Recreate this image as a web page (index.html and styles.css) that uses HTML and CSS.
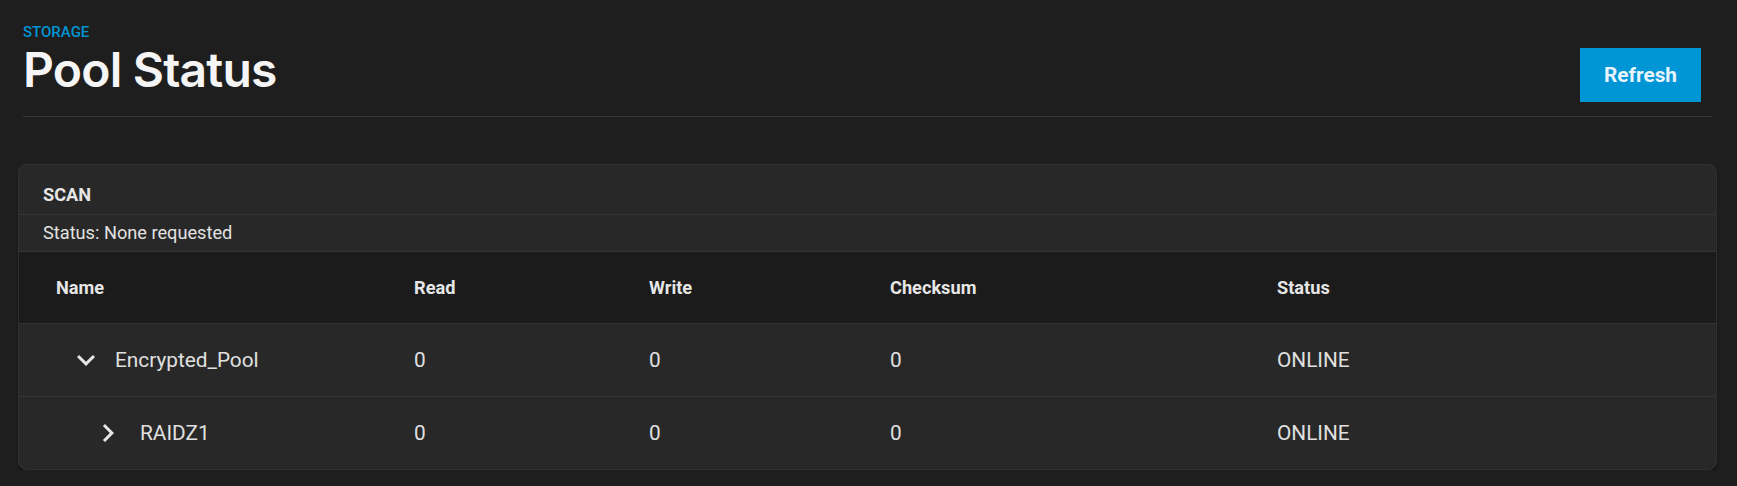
FILE: index.html
```html
<!DOCTYPE html>
<html lang="en">
<head>
<meta charset="utf-8">
<title>Pool Status</title>
<link rel="stylesheet" href="styles.css">
</head>
<body>
  <header class="page-header">
    <div class="titles">
      <div class="crumb">STORAGE</div>
      <h1 class="title">Pool Status</h1>
    </div>
    <button class="btn-primary">Refresh</button>
  </header>

  <section class="card">
    <div class="scan-title">SCAN</div>
    <div class="scan-status">Status: None requested</div>
    <div class="grid head">
      <div class="cell">Name</div>
      <div class="cell">Read</div>
      <div class="cell">Write</div>
      <div class="cell">Checksum</div>
      <div class="cell">Status</div>
    </div>
    <div class="grid row">
      <div class="cell name lvl0">
        <svg class="chev" viewBox="0 0 24 24"><path d="M16.59 8.59L12 13.17 7.41 8.59 6 10l6 6 6-6z"/></svg>
        <span class="nm">Encrypted_Pool</span>
      </div>
      <div class="cell">0</div>
      <div class="cell">0</div>
      <div class="cell">0</div>
      <div class="cell">ONLINE</div>
    </div>
    <div class="grid row last">
      <div class="cell name lvl1">
        <svg class="chev" viewBox="0 0 24 24"><path d="M10 6L8.59 7.41 13.17 12l-4.58 4.59L10 18l6-6z"/></svg>
        <span class="nm">RAIDZ1</span>
      </div>
      <div class="cell">0</div>
      <div class="cell">0</div>
      <div class="cell">0</div>
      <div class="cell">ONLINE</div>
    </div>
  </section>
</body>
</html>
```

FILE: styles.css
```css
html, body {
  margin: 0;
  padding: 0;
  background: #1e1e1e;
  color: #e0e0e0;
  font-family: Roboto, "Liberation Sans", sans-serif;
}

.page-header {
  display: flex;
  justify-content: space-between;
  align-items: flex-start;
  margin: 0 25px 0 23px;
  padding: 23px 0 14px;
  border-bottom: 1px solid #383838;
}

.crumb {
  font-size: 15px;
  line-height: 18px;
  font-weight: 500;
  color: #0095d5;
}

.title {
  margin: 0;
  font-family: Inter, "Noto Sans", sans-serif;
  font-size: 48px;
  line-height: 58px;
  font-weight: 600;
  color: #f5f5f5;
  letter-spacing: -0.8px;
}

.btn-primary {
  margin: 25px 11px 0 0;
  width: 121px;
  height: 54px;
  border: 0;
  border-radius: 0;
  background: #0095d5;
  color: #e8f4fb;
  font-family: Roboto, "Liberation Sans", sans-serif;
  font-size: 20.8px;
  font-weight: 700;
  padding: 0;
}

.card {
  margin: 47px 20px 0 18px;
  background: #282828;
  border: 1px solid #303030;
  border-radius: 8px;
  box-shadow: 0 2px 2px rgba(0, 0, 0, 0.55);
  overflow: hidden;
}

.scan-title {
  padding: 19px 0 9px 24px;
  font-size: 18.2px;
  line-height: 21px;
  font-weight: 700;
  color: #e6e6e6;
  border-bottom: 1px solid #343434;
}

.scan-status {
  padding: 7px 0 7px 24px;
  font-size: 18.2px;
  line-height: 22px;
  color: #e2e2e2;
  border-bottom: 1px solid #343434;
}

.grid {
  display: grid;
  grid-template-columns: 358px 235px 241px 387px 1fr;
  padding-left: 37px;
  align-items: center;
}

.head {
  height: 71px;
  background: #1b1b1b;
  border-bottom: 1px solid #343434;
  font-size: 18.2px;
  font-weight: 700;
  color: #e6e6e6;
}

.row {
  height: 72px;
  font-size: 20.8px;
  color: #e0e0e0;
  border-bottom: 1px solid #343434;
}

.row.last {
  height: 72px;
  border-bottom: 0;
}

.name {
  display: flex;
  align-items: center;
}

.chev {
  width: 36px;
  height: 36px;
  fill: #e6e6e6;
  flex: none;
}

.lvl0 .chev {
  margin-left: 12px;
  margin-right: 11px;
}

.lvl1 .chev {
  margin-left: 34px;
  margin-right: 14px;
}
```
